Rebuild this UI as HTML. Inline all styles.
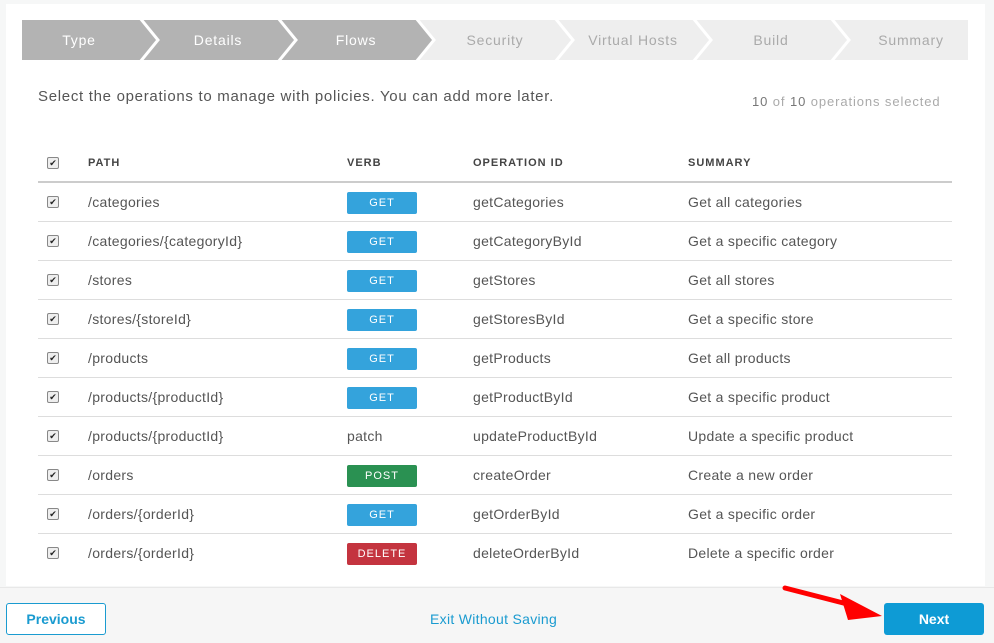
<!DOCTYPE html>
<html><head><style>
body{margin:0;width:994px;height:642px;background:#f6f7f7;font-family:"Liberation Sans",sans-serif;position:relative;overflow:hidden}
.panel{position:absolute;left:6px;top:4px;width:979px;height:582px;background:#fff}
.foot{position:absolute;left:0;top:587px;width:994px;height:55px;background:#f6f6f6;border-top:1px solid #e8e8e8}
.t{position:absolute;font-size:14px;color:#555;white-space:nowrap}
.row{position:absolute;left:38px;width:914px;height:38px;border-bottom:1px solid #ddd}
.cb{position:absolute;left:9px;top:13px;width:10px;height:10px;border:1px solid #888;border-radius:2px;background:#eee;font-size:9px;line-height:10px;text-align:center;color:#222}
.badge{position:absolute;left:309px;top:9px;width:70px;height:22px;border-radius:2px;color:#fff;font-size:11px;letter-spacing:1px;text-align:center;line-height:22px}
.c{position:absolute;top:11px;font-size:14px;color:#555;letter-spacing:0.3px;white-space:nowrap}
</style></head><body>
<div class="panel"></div>
<svg style="position:absolute;left:22px;top:20px" width="946" height="40">
<rect width="946" height="40" fill="#eeeeee"/>
<polygon points="0,0 394,0 412,20 394,40 0,40" fill="#b3b3b3"/>
<g fill="none" stroke="#fff" stroke-width="3">
<polyline points="118,-2 136,20 118,42"/><polyline points="256,-2 274,20 256,42"/><polyline points="394,-2 412,20 394,42"/><polyline points="533,-2 551,20 533,42"/><polyline points="671,-2 689,20 671,42"/><polyline points="809,-2 827,20 809,42"/>
</g>
<g font-size="14" text-anchor="middle" letter-spacing="0.8">
<text x="57" y="25" fill="#fff">Type</text><text x="196" y="25" fill="#fff">Details</text><text x="334" y="25" fill="#fff">Flows</text>
<text x="473" y="25" fill="#aaa">Security</text><text x="611" y="25" fill="#aaa">Virtual Hosts</text><text x="749" y="25" fill="#aaa">Build</text><text x="889" y="25" fill="#aaa">Summary</text>
</g></svg>
<div class="t" style="left:38px;top:88px;font-size:15px;letter-spacing:0.7px">Select the operations to manage with policies. You can add more later.</div>
<div class="t" style="left:752px;top:94px;font-size:13px;color:#aaa;letter-spacing:0.9px"><b style="color:#777;font-weight:normal">10</b> of <b style="color:#777;font-weight:normal">10</b> operations selected</div>
<div class="row" style="top:144px;height:37px;border-bottom:2px solid #ccc">
<div class="cb">✔</div>
<div class="c" style="left:50px;top:13px;font-size:11px;font-weight:bold;letter-spacing:1px;color:#444">PATH</div>
<div class="c" style="left:309px;top:13px;font-size:11px;font-weight:bold;letter-spacing:1px;color:#444">VERB</div>
<div class="c" style="left:435px;top:13px;font-size:11px;font-weight:bold;letter-spacing:1px;color:#444">OPERATION ID</div>
<div class="c" style="left:650px;top:13px;font-size:11px;font-weight:bold;letter-spacing:1px;color:#444">SUMMARY</div>
</div>
<div class="row" style="top:183px"><div class="cb">✔</div><div class="c" style="left:50px">/categories</div><div class="badge" style="background:#34a3dc">GET</div><div class="c" style="left:435px">getCategories</div><div class="c" style="left:650px">Get all categories</div></div>
<div class="row" style="top:222px"><div class="cb">✔</div><div class="c" style="left:50px">/categories/{categoryId}</div><div class="badge" style="background:#34a3dc">GET</div><div class="c" style="left:435px">getCategoryById</div><div class="c" style="left:650px">Get a specific category</div></div>
<div class="row" style="top:261px"><div class="cb">✔</div><div class="c" style="left:50px">/stores</div><div class="badge" style="background:#34a3dc">GET</div><div class="c" style="left:435px">getStores</div><div class="c" style="left:650px">Get all stores</div></div>
<div class="row" style="top:300px"><div class="cb">✔</div><div class="c" style="left:50px">/stores/{storeId}</div><div class="badge" style="background:#34a3dc">GET</div><div class="c" style="left:435px">getStoresById</div><div class="c" style="left:650px">Get a specific store</div></div>
<div class="row" style="top:339px"><div class="cb">✔</div><div class="c" style="left:50px">/products</div><div class="badge" style="background:#34a3dc">GET</div><div class="c" style="left:435px">getProducts</div><div class="c" style="left:650px">Get all products</div></div>
<div class="row" style="top:378px"><div class="cb">✔</div><div class="c" style="left:50px">/products/{productId}</div><div class="badge" style="background:#34a3dc">GET</div><div class="c" style="left:435px">getProductById</div><div class="c" style="left:650px">Get a specific product</div></div>
<div class="row" style="top:417px"><div class="cb">✔</div><div class="c" style="left:50px">/products/{productId}</div><div class="c" style="left:309px">patch</div><div class="c" style="left:435px">updateProductById</div><div class="c" style="left:650px">Update a specific product</div></div>
<div class="row" style="top:456px"><div class="cb">✔</div><div class="c" style="left:50px">/orders</div><div class="badge" style="background:#2a9152">POST</div><div class="c" style="left:435px">createOrder</div><div class="c" style="left:650px">Create a new order</div></div>
<div class="row" style="top:495px"><div class="cb">✔</div><div class="c" style="left:50px">/orders/{orderId}</div><div class="badge" style="background:#34a3dc">GET</div><div class="c" style="left:435px">getOrderById</div><div class="c" style="left:650px">Get a specific order</div></div>
<div class="row" style="top:534px;border-bottom:none"><div class="cb">✔</div><div class="c" style="left:50px">/orders/{orderId}</div><div class="badge" style="background:#c4343f">DELETE</div><div class="c" style="left:435px">deleteOrderById</div><div class="c" style="left:650px">Delete a specific order</div></div>
<div class="foot"></div>
<div style="position:absolute;left:6px;top:603px;width:98px;height:30px;border:1px solid #1a9bd0;border-radius:3px;background:#fff;color:#1a9bd0;font-weight:bold;font-size:14px;text-align:center;line-height:30px">Previous</div>
<div class="t" style="left:430px;top:611px;color:#1a9bd0;letter-spacing:0.3px">Exit Without Saving</div>
<div style="position:absolute;left:884px;top:603px;width:100px;height:32px;border-radius:3px;background:#0e9bd5;color:#fff;font-weight:bold;font-size:14px;text-align:center;line-height:32px">Next</div>
<svg style="position:absolute;left:780px;top:580px" width="110" height="40"><line x1="5" y1="8" x2="75" y2="26" stroke="#f00" stroke-width="5" stroke-linecap="round"/><polygon points="102,36 60,14 68,40" fill="#f00"/></svg>
</body></html>
